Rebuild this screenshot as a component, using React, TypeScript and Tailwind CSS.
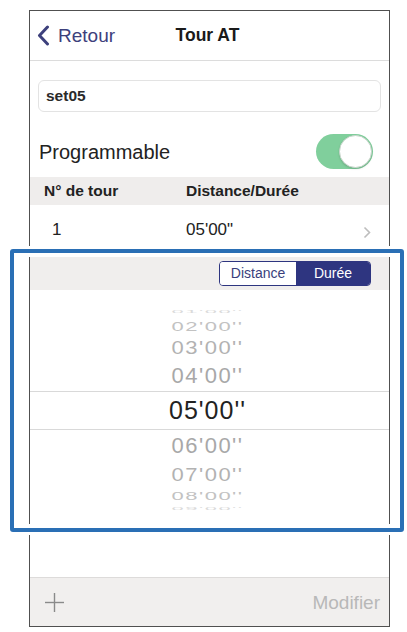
import React from "react";

const F = "font-['Liberation_Sans',Arial,sans-serif]";

type Item = { t: string; h: number; s: number; c: string; size: number; track: number };

const items: Item[] = [
  { t: "01'00''", h: 12, s: 0.2, c: "#dadada", size: 22, track: 1.5 },
  { t: "02'00''", h: 17, s: 0.57, c: "#c2c2c2", size: 22, track: 1.5 },
  { t: "03'00''", h: 26, s: 0.82, c: "#b2b2b2", size: 22, track: 1.5 },
  { t: "04'00''", h: 30, s: 1, c: "#a8a8a8", size: 22, track: 1.5 },
];
const itemsBelow: Item[] = [
  { t: "06'00''", h: 32, s: 1, c: "#a8a8a8", size: 22, track: 1.5 },
  { t: "07'00''", h: 26, s: 0.82, c: "#b2b2b2", size: 22, track: 1.5 },
  { t: "08'00''", h: 16, s: 0.5, c: "#c2c2c2", size: 22, track: 1.5 },
  { t: "09'00''", h: 10, s: 0.2, c: "#dadada", size: 22, track: 1.5 },
];

function PickerItem({ it }: { it: Item }) {
  return (
    <div className="flex items-center justify-center overflow-visible" style={{ height: it.h }}>
      <span
        className="leading-none whitespace-nowrap"
        style={{
          color: it.c,
          fontSize: it.size,
          letterSpacing: it.track,
          transform: `scaleY(${it.s})`,
          display: "inline-block",
        }}
      >
        {it.t}
      </span>
    </div>
  );
}

export default function App() {
  return (
    <div className={`relative w-[407px] h-[632px] bg-white ${F}`}>
      <div className="pt-[10px] pl-[29px]">
        <div className="w-[361px] h-[617px] border-[1.5px] border-[#505050] flex flex-col bg-white overflow-hidden">
          {/* nav */}
          <div className="h-[50px] shrink-0 border-b border-[#dcdcdc] grid grid-cols-[1fr_auto_1fr] items-center">
            <div className="flex items-center pl-[7px]">
              <svg width="13" height="21" viewBox="0 0 13 21" className="mr-[8px]">
                <polyline points="10.5,2 2.5,10.5 10.5,19" fill="none" stroke="#3d407c" strokeWidth="3" strokeLinecap="round" strokeLinejoin="round" />
              </svg>
              <span className="text-[19px] text-[#3d407c] leading-none">Retour</span>
            </div>
            <div className="text-[17.5px] font-bold text-[#1a1a1a] leading-none pr-[4px]">Tour AT</div>
            <div />
          </div>

          {/* text field */}
          <div className="mt-[19px] mx-[8px] h-[32px] shrink-0 rounded-[6px] border border-[#e3e3e3] flex items-center pl-[7px]">
            <span className="text-[15.5px] text-[#2a2a2a] font-bold leading-none">set05</span>
          </div>

          {/* programmable */}
          <div className="h-[65px] shrink-0 flex items-end justify-between pl-[9px] pr-[16px] pb-[8px]">
            <span className="text-[20px] text-[#222] leading-none mb-[7px]">Programmable</span>
            <div className="w-[57px] h-[35px] rounded-full bg-[#80cf9c] flex items-center justify-end p-[1px]">
              <div className="w-[33px] h-[33px] rounded-full bg-white border border-[#c9d6cc] shadow-[0_1px_2px_rgba(0,0,0,0.15)]" />
            </div>
          </div>

          {/* header */}
          <div className="h-[28px] shrink-0 bg-[#efedec] flex items-center pl-[14px]">
            <span className="w-[142px] text-[15.5px] font-bold text-[#222] leading-none">N° de tour</span>
            <span className="text-[15.5px] font-bold text-[#222] leading-none">Distance/Durée</span>
          </div>

          {/* row */}
          <div className="h-[48px] shrink-0 flex items-center pl-[22px] pr-[18px]">
            <span className="w-[134px] text-[17px] text-[#222] leading-none">1</span>
            <span className="flex-1 text-[17px] text-[#222] leading-none">05'00"</span>
            <svg width="8" height="13" viewBox="0 0 8 13" className="mt-[6px]">
              <polyline points="1.5,1.5 6.5,6.5 1.5,11.5" fill="none" stroke="#bdbdbd" strokeWidth="1.6" />
            </svg>
          </div>

          {/* segmented bar */}
          <div className="h-[37px] shrink-0 bg-[#f0eeed] flex items-center justify-end pr-[18px] pt-[3px]">
            <div className="flex h-[25px] rounded-[4px] border border-[#2e3580] overflow-hidden">
              <div className="w-[76px] bg-white flex items-center justify-center text-[14px] text-[#3a3f7c] leading-none">Distance</div>
              <div className="w-[74px] bg-[#2e3580] flex items-center justify-center text-[14px] text-white leading-none">Durée</div>
            </div>
          </div>

          {/* picker */}
          <div className="flex flex-col pt-[16px] pr-[4px]">
            {items.map((it) => (
              <PickerItem key={it.t} it={it} />
            ))}
            <div className="h-[39px] border-t border-b border-[#d9d9d9] -mr-[4px] pr-[4px] flex items-center justify-center">
              <span className="text-[25px] leading-none text-[#222] tracking-[1px]">05'00''</span>
            </div>
            {itemsBelow.map((it) => (
              <PickerItem key={it.t} it={it} />
            ))}
          </div>

          <div className="flex-1" />

          {/* toolbar */}
          <div className="h-[49px] shrink-0 bg-[#f1efee] border-t border-[#dddbda] flex items-center justify-between pl-[14px] pr-[9px]">
            <svg width="21" height="21" viewBox="0 0 21 21">
              <line x1="10.5" y1="1" x2="10.5" y2="20" stroke="#8a8a8a" strokeWidth="1.4" />
              <line x1="1" y1="10.5" x2="20" y2="10.5" stroke="#8a8a8a" strokeWidth="1.4" />
            </svg>
            <span className="text-[19px] text-[#b8b8b8] leading-none">Modifier</span>
          </div>
        </div>
      </div>

      {/* highlight overlay */}
      <div className="absolute left-[10px] top-[249px] w-[394px] h-[283px] border-4 border-[#2a6fb5] rounded-[3px] shadow-[0_0_0_3px_#fff,inset_0_0_0_4px_#fff]" />
    </div>
  );
}
